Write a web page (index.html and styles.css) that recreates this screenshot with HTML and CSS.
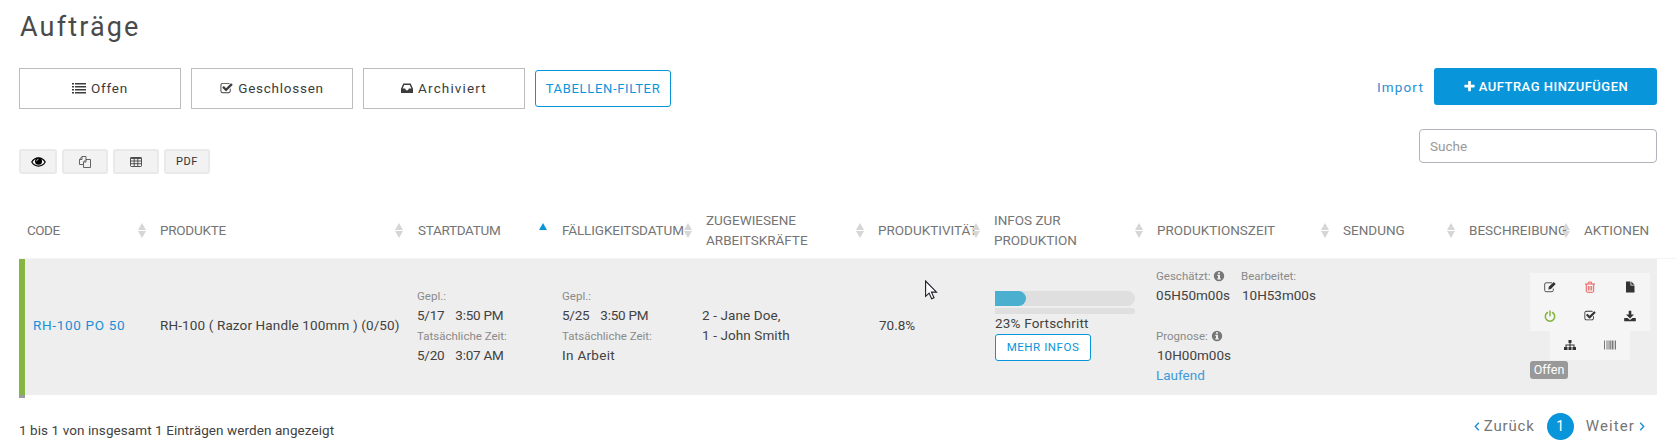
FILE: index.html
```html
<!DOCTYPE html>
<html lang="de">
<head>
<meta charset="utf-8">
<title>Aufträge</title>
<link rel="stylesheet" href="styles.css">
</head>
<body>
<svg width="0" height="0" class="sprite">
  <symbol id="i-check" viewBox="0 0 1792 1792"><path d="M1472 930v318q0 119-84.500 203.500t-203.500 84.500h-832q-119 0-203.500-84.500t-84.500-203.500v-832q0-119 84.500-203.500t203.500-84.500h832q63 0 117 25 15 7 18 23 3 17-9 29l-49 49q-10 10-23 10-3 0-9-2-23-6-45-6h-832q-66 0-113 47t-47 113v832q0 66 47 113t113 47h832q66 0 113-47t47-113v-254q0-13 9-22l64-64q10-10 23-10 6 0 12 3 20 8 20 29zm231-489l-814 814q-24 24-57 24t-57-24l-430-430q-24-24-24-57t24-57l110-110q24-24 57-24t57 24l263 263 647-647q24-24 57-24t57 24l110 110q24 24 24 57t-24 57z"/></symbol>
  <symbol id="i-plus" viewBox="0 0 1792 1792"><path d="M1600 736v192q0 40-28 68t-68 28h-416v416q0 40-28 68t-68 28h-192q-40 0-68-28t-28-68v-416h-416q-40 0-68-28t-28-68v-192q0-40 28-68t68-28h416v-416q0-40 28-68t68-28h192q40 0 68 28t28 68v416h416q40 0 68 28t28 68z"/></symbol>
  <symbol id="i-sort" viewBox="0 0 8 15"><path d="M0 7 4 0l4 7zM0 8h8l-4 7z"/></symbol>
  <symbol id="i-info" viewBox="0 0 12 12"><path fill-rule="evenodd" d="M6 .8a5.200 5.200 0 1 0 0 10.400A5.200 5.200 0 0 0 6 .8zM5 2.200h2v1.500H5zM4.300 4.700H7v3.600h.8v1.300H4.300V8.300H5V6h-.7z"/></symbol>
</svg>

<main class="page">
  <h1 class="title">Aufträge</h1>

  <div class="toolbar">
    <div class="filters">
      <a class="tab"><svg class="ic list" viewBox="0 0 14 12"><path d="M0 1h2v1.500H0zM0 4h2v1.500H0zM0 7h2v1.500H0zM0 10h2v1.500H0zM3 1h11v1.500H3zM3 4h11v1.500H3zM3 7h11v1.500H3zM3 10h11v1.500H3z"/></svg><span>Offen</span></a>
      <a class="tab"><svg class="ic"><use href="#i-check"/></svg><span>Geschlossen</span></a>
      <a class="tab tab-archive"><svg class="ic inbox" viewBox="0 0 12 12"><path fill-rule="evenodd" d="M2.300 1.500h7.400L12 6.800v4.200H0V6.800zM3.200 3 1.700 6.600h2.500l.8 1.600h2l.8-1.600h2.500L8.800 3z"/></svg><span>Archiviert</span></a>
      <a class="table-filter">TABELLEN-FILTER</a>
    </div>
    <div class="create">
      <a class="import">Import</a>
      <a class="add"><svg class="ic"><use href="#i-plus"/></svg><span>AUFTRAG HINZUFÜGEN</span></a>
    </div>
  </div>

  <div class="subbar">
    <div class="exports">
      <button class="tool eye"><svg width="15" height="12" viewBox="0 0 15 12"><path fill="none" stroke="#000" stroke-width="1.200" d="M.8 6C3.900.4 11.100.4 14.200 6 11.100 11.400 3.900 11.400.8 6z"/><circle cx="7.500" cy="5.300" r="3.500"/><path fill="none" stroke="#ddd" stroke-width=".8" d="M5.600 5.200a2 2 0 0 1 1.900-1.900"/></svg></button>
      <button class="tool"><svg width="12" height="12" viewBox="0 0 12 12" fill="none" stroke="#555" stroke-width=".9"><path d="M4.500 8.500h-4v-5l2.500-3h4v3M3 .5v3H.5M7 3.500h4.500v8h-7V6zM7 3.500V6H4.500"/></svg></button>
      <button class="tool"><svg width="12" height="10" viewBox="0 0 12 10" fill="none" stroke="#444" stroke-width=".9"><rect x=".5" y=".5" width="11" height="9" rx=".8"/><path stroke-width="1.400" d="M.5 1.200h11"/><path d="M.5 4h11M.5 6.700h11M4.200 1v8.500M7.800 1v8.500"/></svg></button>
      <button class="tool">PDF</button>
    </div>
    <input class="search" type="text" placeholder="Suche">
  </div>

  <section class="table">
    <div class="row head">
      <div class="th th-code">CODE<svg class="sort"><use href="#i-sort"/></svg></div>
      <div class="th th-prod">PRODUKTE<svg class="sort"><use href="#i-sort"/></svg></div>
      <div class="th th-start">STARTDATUM<svg class="sort asc" viewBox="0 0 8 7"><path d="M0 7 4 0l4 7z"/></svg></div>
      <div class="th th-due">FÄLLIGKEITSDATUM<svg class="sort"><use href="#i-sort"/></svg></div>
      <div class="th">ZUGEWIESENE<br>ARBEITSKRÄFTE<svg class="sort"><use href="#i-sort"/></svg></div>
      <div class="th">PRODUKTIVITÄT<svg class="sort"><use href="#i-sort"/></svg></div>
      <div class="th">INFOS ZUR<br>PRODUKTION<svg class="sort"><use href="#i-sort"/></svg></div>
      <div class="th">PRODUKTIONSZEIT<svg class="sort"><use href="#i-sort"/></svg></div>
      <div class="th">SENDUNG<svg class="sort"><use href="#i-sort"/></svg></div>
      <div class="th">BESCHREIBUNG<svg class="sort"><use href="#i-sort"/></svg></div>
      <div class="th">AKTIONEN</div>
    </div>

    <div class="row order">
      <div class="td td-code"><a class="order-link">RH-100 PO 50</a></div>
      <div class="td td-prod">RH-100 ( Razor Handle 100mm ) (0/50)</div>
      <div class="td">
        <div class="label">Gepl.:</div>
        <div class="when"><span>5/17</span><span>3:50 PM</span></div>
        <div class="label">Tatsächliche Zeit:</div>
        <div class="when"><span>5/20</span><span>3:07 AM</span></div>
      </div>
      <div class="td td-due">
        <div class="label">Gepl.:</div>
        <div class="when"><span>5/25</span><span>3:50 PM</span></div>
        <div class="label">Tatsächliche Zeit:</div>
        <div class="state">In Arbeit</div>
      </div>
      <div class="td td-staff">2 - Jane Doe,<br>1 - John Smith</div>
      <div class="td td-rate">70.8%</div>
      <div class="td td-info">
        <div class="bar"><div class="fill"></div></div>
        <div class="bar thin"></div>
        <div class="progress">23% Fortschritt</div>
        <a class="more">MEHR INFOS</a>
      </div>
      <div class="td td-time">
        <div class="pair">
          <div><div class="label">Geschätzt: <svg class="info"><use href="#i-info"/></svg></div><div>05H50m00s</div></div>
          <div><div class="label">Bearbeitet:</div><div class="indent">10H53m00s</div></div>
        </div>
        <div class="label forecast">Prognose: <svg class="info"><use href="#i-info"/></svg></div>
        <div class="indent">10H00m00s</div>
        <a class="running">Laufend</a>
      </div>
      <div class="td"></div>
      <div class="td"></div>
      <div class="actions">
        <div class="acts">
          <a><svg viewBox="0 0 12 12"><path fill="none" stroke="#555" d="M8 1.800H2A1.300 1.300 0 0 0 .7 3v6.500A1.300 1.300 0 0 0 2 10.700h6a1.300 1.300 0 0 0 1.300-1.200V7.600"/><path d="m4.400 8.400.4-2.600L9.700.9l2 2L6.900 7.900z"/></svg></a>
          <a><svg viewBox="0 0 12 12" fill="none" stroke="#e8615f"><path d="M1 3h10M2.300 3v7.200q0 1.100 1 1.100h5.400q1 0 1-1.100V3M4 3l.6-1.900h2.800L8 3M4.300 5v4.500M6 5v4.500M7.700 5v4.500"/></svg></a>
          <a><svg viewBox="0 0 12 12"><path d="M2 .5h4.500V4.500H10.500v7H2zM7.300.5l3.200 3.200H7.300z"/></svg></a>
          <a><svg viewBox="0 0 12 12" fill="none" stroke="#82b440" stroke-width="1.500" stroke-linecap="round"><path d="M3.500 2.500a4.700 4.700 0 1 0 5 0M6 1v4.800"/></svg></a>
          <a><svg><use href="#i-check"/></svg></a>
          <a><svg viewBox="0 0 12 12"><path d="M4.700.7h2.600v3.800H10L6 8.500 2 4.500h2.700zM.2 8h3.300L6 10l2.500-2h3.300v3.300H.2z"/></svg></a>
          <a><svg viewBox="0 0 12 12"><path d="M4.500 1h3v3h-1v1.500h4V8H12v3H8.500V8h1V6.500h-3V8h1v3h-3V8h1V6.500h-3V8h1v3H0V8h1.500V5.500h4V4h-1z"/></svg></a>
          <a><svg viewBox="0 0 12 12" fill="#777"><path d="M0 1.500h1v9H0zM2 1.500h.5v9H2zM3.500 1.500h1v9h-1zM5 1.500h.6v9H5zM6.200 1.500h1v9h-1zM7.800 1.500h1.200v9H7.800zM9.500 1.500h.6v9h-.6zM10.800 1.500h1.200v9h-1.200z"/></svg></a>
        </div>
        <span class="badge">Offen</span>
      </div>
    </div>
  </section>

  <footer class="foot">
    <div class="summary">1 bis 1 von insgesamt 1 Einträgen werden angezeigt</div>
    <nav class="pager">
      <a class="prev"><svg class="chev" viewBox="0 0 6 9"><path d="M4.800.8 1.300 4.500l3.500 3.700"/></svg>Zurück</a>
      <a class="current">1</a>
      <a class="next">Weiter<svg class="chev" viewBox="0 0 6 9"><path d="M1.200.8l3.500 3.700-3.500 3.700"/></svg></a>
    </nav>
  </footer>
</main>
<svg class="cursor" viewBox="0 0 13 20"><path d="M.6 1v15.300l3.500-3.200 2.500 5.600 2.400-1-2.500-5.600h5z"/></svg>
</body>
</html>
```
FILE: styles.css
```css
* { box-sizing: border-box; }
body {
  margin: 0;
  background: #fff;
  color: #424242;
  font: 13.5px/20px Roboto, "Liberation Sans", sans-serif;
  overflow: hidden;
}
.sprite { position: absolute; }
.page { padding: 0 19px; height: 445px; }
.title {
  margin: 0;
  padding: 9px 0 0 1px;
  height: 68px;
  font-size: 27px;
  line-height: 36px;
  font-weight: 400;
  letter-spacing: 2.15px;
  color: #4a4a4a;
}

/* Toolbar */
.toolbar, .filters, .create, .subbar, .exports { display: flex; }
.toolbar { justify-content: space-between; height: 61px; align-items: flex-start; }
.filters { gap: 10px; }
.tab {
  width: 162px;
  height: 41px;
  padding-bottom: 1px;
  border: 1px solid #bdbdbd;
  display: flex;
  align-items: center;
  justify-content: center;
  gap: 5px;
  font-size: 13.5px;
  letter-spacing: .75px;
  color: #3c3c3c;
}
.tab-archive { letter-spacing: 1.15px; }
.ic { width: 13px; height: 13px; fill: currentColor; }
.ic.list { width: 14px; height: 12px; }
.ic.inbox { width: 12px; height: 12px; }
.table-filter {
  margin-top: 2px;
  width: 136px;
  height: 37px;
  border: 1px solid #0995da;
  border-radius: 3px;
  color: #0995da;
  font-size: 13px;
  line-height: 35px;
  letter-spacing: .67px;
  text-align: center;
}
.create { gap: 10px; }
.import { font-size: 13.5px; line-height: 38px; letter-spacing: 1.15px; color: #2a8ed0; }
.add {
  width: 223px;
  height: 37px;
  border-radius: 3px;
  background: #0995da;
  color: #fff;
  font-size: 13px;
  font-weight: 500;
  letter-spacing: .5px;
  display: flex;
  align-items: center;
  justify-content: center;
  gap: 3px;
}
.subbar { justify-content: space-between; align-items: flex-start; height: 72px; }
.exports { gap: 5px; padding-top: 20px; }
.tool {
  width: 46px;
  height: 25px;
  padding: 0;
  border: 2px solid #e9e9e9;
  border-radius: 3px;
  background: #f2f2f2;
  color: #333;
  display: flex;
  align-items: center;
  justify-content: center;
  font: 11px Roboto, sans-serif;
  letter-spacing: .6px;
}
.tool.eye { width: 38px; }
.search {
  width: 238px;
  height: 34px;
  border: 1px solid #b3b3bb;
  border-radius: 4px;
  padding: 0 10px;
  font: 13.5px Roboto, sans-serif;
}
.search::placeholder { color: #999; opacity: 1; }

/* Orders table */
.row {
  display: grid;
  grid-template-columns: 131px 257px 144px 145px 172px 116px 163px 186px 126px 115px 83px;
}
.head {
  height: 58px;
  margin-right: -19px;
  border-bottom: 1px solid #f4f4f4;
  color: #757575;
}
.th {
  position: relative;
  display: flex;
  align-items: center;
  padding-left: 10px;
  white-space: nowrap;
}
.th-code { padding-left: 8px; letter-spacing: -.5px; }
.th-prod { letter-spacing: -.25px; }
.th-start { padding-left: 11px; letter-spacing: -.3px; }
.th-due { padding-left: 11px; letter-spacing: -.1px; }
.sort {
  position: absolute;
  right: 4px;
  top: 22px;
  width: 8px;
  height: 15px;
  fill: #d6d6d6;
}
.sort.asc { height: 7px; fill: #0995da; }
.order {
  height: 136px;
  padding-bottom: 3px;
  background: #eee;
  align-items: center;
}
.td { padding: 0 0 2px 10px; white-space: nowrap; }
.td-code {
  position: relative;
  align-self: stretch;
  display: flex;
  align-items: center;
  margin-bottom: -3px;
  padding: 0 0 5px 8px;
  border-left: 6px solid #86b543;
}
.td-code::after {
  content: "";
  position: absolute;
  left: -6px;
  bottom: -3px;
  width: 6px;
  height: 3px;
  background: #9c9c9c;
}
.order-link { color: #1a8fd6; letter-spacing: .68px; }
.td-prod { letter-spacing: .13px; }
.label { height: 20px; line-height: 22px; font-size: 11.5px; color: #8a8a8a; }
.when { display: flex; gap: 11px; letter-spacing: -.25px; }
.td-due { padding-left: 11px; }
.state { letter-spacing: .3px; }
.td-staff { padding-left: 6px; letter-spacing: .1px; }
.td-rate { padding-left: 11px; }
.td-info { padding: 0 0 0 11px; }
.bar { width: 140px; height: 15px; background: #dfdfdf; border-radius: 0 8px 8px 0; }
.fill { width: 31px; height: 15px; background: #4bafd0; border-radius: 0 8px 8px 0; }
.bar.thin { height: 6px; margin-top: 2px; border-radius: 0 3px 3px 0; }
.progress { line-height: 18px; height: 20px; letter-spacing: .18px; }
.more {
  display: block;
  width: 96px;
  height: 27px;
  border: 1px solid #0995da;
  border-radius: 3px;
  background: #fff;
  color: #0995da;
  font-size: 11.5px;
  line-height: 25px;
  letter-spacing: .55px;
  text-align: center;
}
.td-time { padding-left: 9px; }
.pair { display: flex; gap: 11px; }
.indent { padding-left: 1px; }
.forecast { margin-top: 20px; }
.info { width: 12px; height: 12px; margin-left: 0; vertical-align: -2px; fill: #777; }
.running { color: #3f9ad8; }
.actions { justify-self: end; margin-right: 7px; width: 120px; height: 106px; }
.acts { display: flex; flex-wrap: wrap; justify-content: center; color: #333; }
.acts a {
  width: 40px;
  height: 29px;
  background: #f5f5f5;
  display: flex;
  align-items: center;
  justify-content: center;
}
.acts svg { width: 12px; height: 12px; }
.acts svg:not([fill]) { fill: #333; }
.badge {
  display: block;
  width: 38px;
  height: 18px;
  margin-top: 1px;
  border-radius: 3px;
  background: #999;
  color: #fff;
  font-size: 12.5px;
  line-height: 17px;
  text-align: center;
}

/* Footer */
.foot { display: flex; justify-content: space-between; padding-top: 18px; }
.summary { padding-top: 7px; letter-spacing: .08px; }
.pager { display: flex; gap: 12px; line-height: 27px; font-size: 15px; color: #757575; padding-right: 12px; }
.pager a { letter-spacing: .85px; }
.pager .next { letter-spacing: 1.1px; }
.prev, .next { display: flex; align-items: center; gap: 4px; }
.chev { width: 6px; height: 9px; fill: none; stroke: #1a8fd6; stroke-width: 1.4; }
.pager .current {
  width: 27px;
  height: 27px;
  border-radius: 50%;
  background: #0995da;
  color: #fff;
  font-size: 14px;
  letter-spacing: 0;
  text-align: center;
}

/* Mouse pointer over the table */
.cursor {
  position: absolute;
  left: 925px;
  top: 280px;
  width: 13px;
  height: 20px;
  fill: #fff;
  stroke: #1c1c2a;
  stroke-width: 1.1;
}
```
